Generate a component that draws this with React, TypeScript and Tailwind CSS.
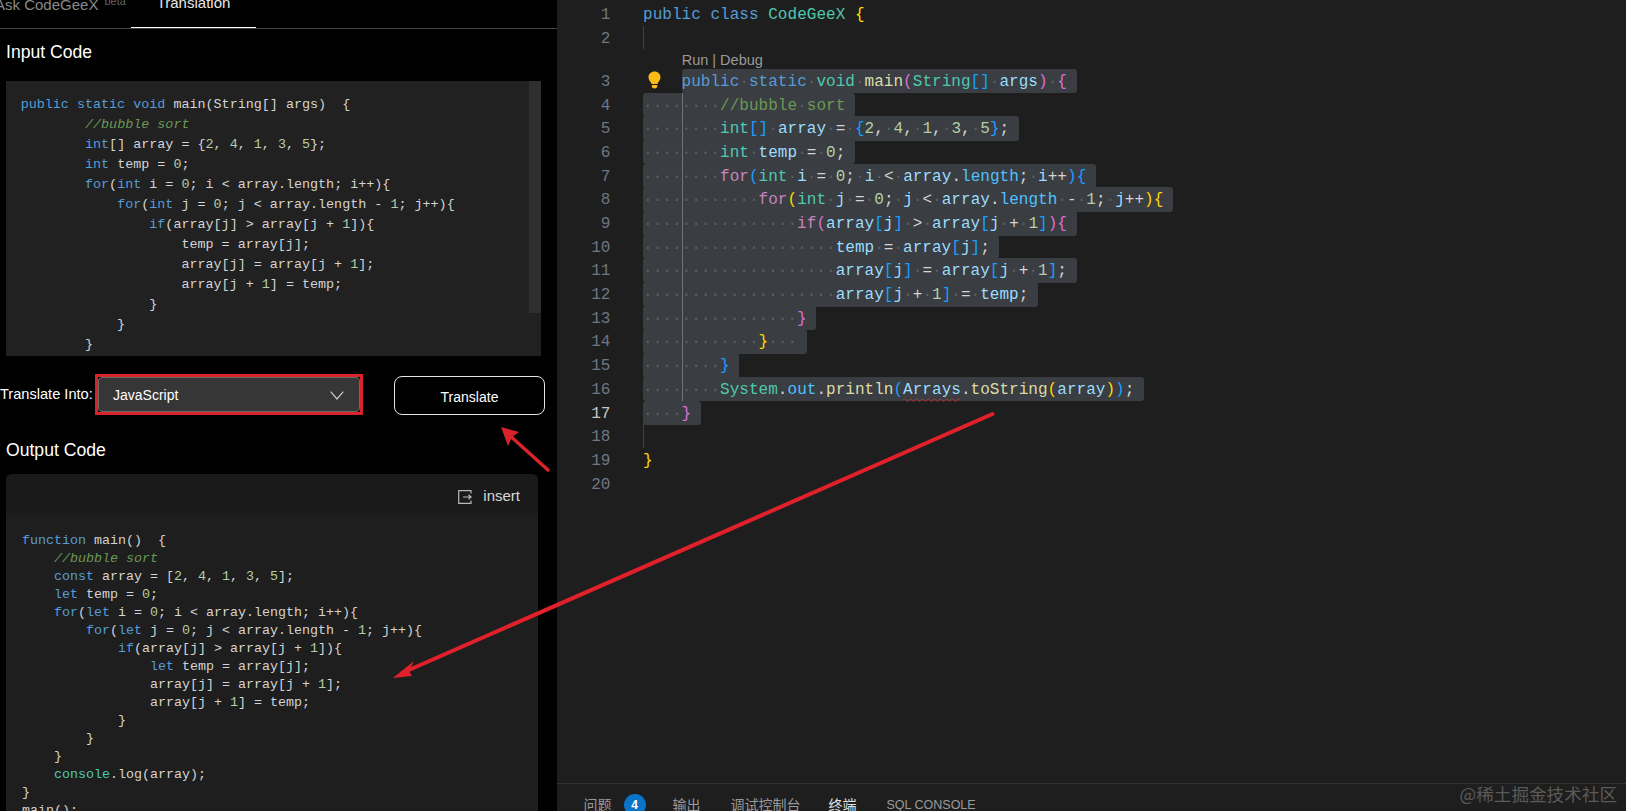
import React from "react";

const KW = "text-[#569cd6]";
const CM = "text-[#6a9955] italic";
const NUM = "text-[#b5cea8]";
const TX = "text-[#d4d4d4]";
const TY = "text-[#4ec9b0]";

type T = [string, string];

function CodeLine({ t }: { t: T[] }) {
  return (
    <div className="whitespace-pre">
      {t.map((p, i) => (
        <span key={i} className={p[1]}>
          {p[0]}
        </span>
      ))}
    </div>
  );
}

const inputCode: T[][] = [
  [["public static void", KW], [" main(String[] args)  {", TX]],
  [["        ", TX], ["//bubble sort", CM]],
  [["        ", TX], ["int", KW], ["[] array = {", TX], ["2", NUM], [", ", TX], ["4", NUM], [", ", TX], ["1", NUM], [", ", TX], ["3", NUM], [", ", TX], ["5", NUM], ["};", TX]],
  [["        ", TX], ["int", KW], [" temp = ", TX], ["0", NUM], [";", TX]],
  [["        ", TX], ["for", KW], ["(", TX], ["int", KW], [" i = ", TX], ["0", NUM], ["; i < array.length; i++){", TX]],
  [["            ", TX], ["for", KW], ["(", TX], ["int", KW], [" j = ", TX], ["0", NUM], ["; j < array.length - ", TX], ["1", NUM], ["; j++){", TX]],
  [["                ", TX], ["if", KW], ["(array[j] > array[j + ", TX], ["1", NUM], ["]){", TX]],
  [["                    temp = array[j];", TX]],
  [["                    array[j] = array[j + ", TX], ["1", NUM], ["];", TX]],
  [["                    array[j + ", TX], ["1", NUM], ["] = temp;", TX]],
  [["                }", TX]],
  [["            }", TX]],
  [["        }", TX]],
];

const outputCode: T[][] = [
  [["function", KW], [" main()  {", TX]],
  [["    ", TX], ["//bubble sort", CM]],
  [["    ", TX], ["const", KW], [" array = [", TX], ["2", NUM], [", ", TX], ["4", NUM], [", ", TX], ["1", NUM], [", ", TX], ["3", NUM], [", ", TX], ["5", NUM], ["];", TX]],
  [["    ", TX], ["let", KW], [" temp = ", TX], ["0", NUM], [";", TX]],
  [["    ", TX], ["for", KW], ["(", TX], ["let", KW], [" i = ", TX], ["0", NUM], ["; i < array.length; i++){", TX]],
  [["        ", TX], ["for", KW], ["(", TX], ["let", KW], [" j = ", TX], ["0", NUM], ["; j < array.length - ", TX], ["1", NUM], ["; j++){", TX]],
  [["            ", TX], ["if", KW], ["(array[j] > array[j + ", TX], ["1", NUM], ["]){", TX]],
  [["                ", TX], ["let", KW], [" temp = array[j];", TX]],
  [["                array[j] = array[j + ", TX], ["1", NUM], ["];", TX]],
  [["                array[j + ", TX], ["1", NUM], ["] = temp;", TX]],
  [["            }", TX]],
  [["        }", TX]],
  [["    }", TX]],
  [["    ", TX], ["console", TY], [".log(array);", TX]],
  [["}", TX]],
  [["main();", TX]],
];

const B = "text-[#569cd6]";
const P = "text-[#da70d6]";
const G = "text-[#ffd700]";
const BL = "text-[#179fff]";
const V = "text-[#9cdcfe]";
const F = "text-[#dcdcaa]";
const C = "text-[#6a9955]";
const O = "text-[#d4d4d4]";
const K = "text-[#c586c0]";
const L = "text-[#4fc1ff]";

type Row = { n: number; t: T[]; sel?: boolean; start?: number; guide4?: boolean; guide0?: boolean };

const rows: Row[] = [
  { n: 1, t: [["public class", B], [" ", O], ["CodeGeeX", TY], [" ", O], ["{", G]] },
  { n: 2, t: [], guide0: true },
  { n: 3, sel: true, start: 4, t: [["public static", B], [" ", O], ["void", TY], [" ", O], ["main", F], ["(", P], ["String", TY], ["[]", BL], [" ", O], ["args", V], [")", P], [" ", O], ["{", P]] },
  { n: 4, sel: true, guide4: true, t: [["        ", O], ["//bubble sort", C]] },
  { n: 5, sel: true, guide4: true, t: [["        ", O], ["int", TY], ["[]", BL], [" ", O], ["array", V], [" = ", O], ["{", BL], ["2", NUM], [", ", O], ["4", NUM], [", ", O], ["1", NUM], [", ", O], ["3", NUM], [", ", O], ["5", NUM], ["}", BL], [";", O]] },
  { n: 6, sel: true, guide4: true, t: [["        ", O], ["int", TY], [" ", O], ["temp", V], [" = ", O], ["0", NUM], [";", O]] },
  { n: 7, sel: true, guide4: true, t: [["        ", O], ["for", K], ["(", BL], ["int", TY], [" ", O], ["i", V], [" = ", O], ["0", NUM], ["; ", O], ["i", V], [" < ", O], ["array", V], [".", O], ["length", L], ["; ", O], ["i", V], ["++", O], ["){", BL]] },
  { n: 8, sel: true, guide4: true, t: [["            ", O], ["for", K], ["(", G], ["int", TY], [" ", O], ["j", V], [" = ", O], ["0", NUM], ["; ", O], ["j", V], [" < ", O], ["array", V], [".", O], ["length", L], [" - ", O], ["1", NUM], ["; ", O], ["j", V], ["++", O], ["){", G]] },
  { n: 9, sel: true, guide4: true, t: [["                ", O], ["if", K], ["(", P], ["array", V], ["[", BL], ["j", V], ["]", BL], [" > ", O], ["array", V], ["[", BL], ["j", V], [" + ", O], ["1", NUM], ["]", BL], ["){", P]] },
  { n: 10, sel: true, guide4: true, t: [["                    ", O], ["temp", V], [" = ", O], ["array", V], ["[", BL], ["j", V], ["]", BL], [";", O]] },
  { n: 11, sel: true, guide4: true, t: [["                    ", O], ["array", V], ["[", BL], ["j", V], ["]", BL], [" = ", O], ["array", V], ["[", BL], ["j", V], [" + ", O], ["1", NUM], ["]", BL], [";", O]] },
  { n: 12, sel: true, guide4: true, t: [["                    ", O], ["array", V], ["[", BL], ["j", V], [" + ", O], ["1", NUM], ["]", BL], [" = ", O], ["temp", V], [";", O]] },
  { n: 13, sel: true, guide4: true, t: [["                ", O], ["}", P]] },
  { n: 14, sel: true, guide4: true, t: [["            ", O], ["}", G], ["   ", O]] },
  { n: 15, sel: true, guide4: true, t: [["        ", O], ["}", BL]] },
  { n: 16, sel: true, guide4: true, t: [["        ", O], ["System", TY], [".", O], ["out", L], [".", O], ["println", F], ["(", BL], ["Arrays", V], [".", O], ["toString", F], ["(", G], ["array", V], [")", G], [")", BL], [";", O]] },
  { n: 17, sel: true, t: [["    ", O], ["}", P]] },
  { n: 18, t: [], guide0: true },
  { n: 19, t: [["}", G]] },
  { n: 20, t: [] },
];

function Toks({ t, sel }: { t: T[]; sel?: boolean }) {
  return (
    <>
      {t.map((p, i) => {
        if (sel && /^ +$/.test(p[0])) {
          return (
            <span key={i} className="text-[#5c5f63]">
              {"·".repeat(p[0].length)}
            </span>
          );
        }
        if (sel && p[0].includes(" ")) {
          const parts = p[0].split(/( +)/);
          return (
            <span key={i} className={p[1]}>
              {parts.map((s, j) =>
                /^ +$/.test(s) ? (
                  <span key={j} className="text-[#5c5f63]">
                    {"·".repeat(s.length)}
                  </span>
                ) : (
                  <span key={j}>{s}</span>
                )
              )}
            </span>
          );
        }
        return (
          <span key={i} className={p[1]}>
            {p[0]}
          </span>
        );
      })}
    </>
  );
}

function EditorRow({ r }: { r: Row }) {
  return (
    <div className="relative flex h-[23.7px] leading-[27.7px]">
      <div className={`w-[53.5px] text-right ${r.n === 17 ? "text-[#c6c6c6]" : "text-[#6e7681]"}`}>{r.n}</div>
      <div className="ml-[32.5px] whitespace-pre">
        {r.start ? <span>{" ".repeat(r.start)}</span> : null}
        {r.sel ? (
          <span className="inline-block h-[24.5px] rounded-[3px] bg-[#3a3d41] pr-[9.63px] align-top">
            <Toks t={r.t} sel />
          </span>
        ) : (
          <Toks t={r.t} />
        )}
      </div>
      {r.guide4 && <div className="absolute left-[124.5px] top-0 h-full w-px bg-[#6f7276]" />}
      {r.guide0 && <div className="absolute left-[86px] top-0 h-full w-px bg-[#404040]" />}
      {r.n === 3 && (
        <svg className="absolute left-[91px] top-[2px]" width="13" height="18" viewBox="0 0 13 18">
          <path d="M6.5 0.5C3 0.5 0.5 3 0.5 6.2c0 2.3 1.3 3.6 2.2 5 .5.8.7 1.3.8 1.8h6c.1-.5.3-1 .8-1.8.9-1.4 2.2-2.7 2.2-5C12.500 3 10 .5 6.500 .5z" fill="#fbbc14" />
          <path d="M3.800 14h5.400v1.500c0 .8-.8 2-2.700 2s-2.700-1.200-2.700-2z" fill="#fbbc14" />
        </svg>
      )}
    </div>
  );
}

export default function App() {
  const sans = "font-['Liberation_Sans',Arial,sans-serif]";
  return (
    <div className={`relative flex h-[811px] w-[1626px] overflow-hidden bg-[#1e1e1e] ${sans}`}>
      {/* left panel */}
      <div className="flex h-full w-[557px] shrink-0 flex-col overflow-hidden bg-black">
        <div className="flex h-[29px] shrink-0 items-end overflow-hidden border-b border-[#444]">
          <div className="ml-[-5px] flex h-[28px] w-[136px] items-end whitespace-nowrap pb-[13px] text-[15px] leading-[20px] text-[#8a8a8a]">
            <span>Ask CodeGeeX</span>
            <span className="mb-[8px] ml-[6px] text-[11px] leading-[12px] text-[#666]">beta</span>
          </div>
          <div className="flex h-[28px] w-[125px] items-end justify-center border-b border-white pb-[14px] text-[15px] leading-[20px] text-[#e8e8e8]">
            Translation
          </div>
        </div>

        <h2 className="ml-[6px] mt-[11px] h-[24px] text-[17.600px] leading-[24px] text-white">Input Code</h2>

        <div className="relative ml-[6px] mt-[17px] h-[275px] w-[535px] shrink-0 overflow-hidden bg-[#212121] pl-[14.700px] pt-[14px] font-['Liberation_Mono',monospace] text-[13.400px] leading-[20px]">
          {inputCode.map((l, i) => (
            <CodeLine key={i} t={l} />
          ))}
          <div className="absolute right-0 top-0 h-[232px] w-[12px] bg-[#2f2f2f]" />
        </div>

        <div className="mt-[18px] flex h-[41px] shrink-0 items-center">
          <span className="w-[92px] whitespace-nowrap text-[14.600px] text-white">Translate Into:</span>
          <div className="ml-[3px] h-[41px] w-[268px] border-[3px] border-[#d7232b]">
            <div className="flex h-full items-center justify-between rounded-[4px] border border-[#6a6a6a] bg-[#363636] pl-[14px] pr-[15px] pt-[2px] text-[14px] text-white">
              <span>JavaScript</span>
              <svg width="14" height="9" viewBox="0 0 14 9" fill="none" stroke="#c8c8c8" strokeWidth="1.200">
                <path d="M0.700 0.700 7 8 13.300 0.700" />
              </svg>
            </div>
          </div>
          <button className="ml-[31px] mt-[1px] flex h-[39px] w-[151px] items-center justify-center rounded-[8px] border border-[#e6e6e6] bg-black pt-[4px] text-[14px] text-white">
            Translate
          </button>
        </div>

        <h2 className="ml-[6px] mt-[23px] h-[24px] text-[17.600px] leading-[24px] text-white">Output Code</h2>

        <div className="ml-[6px] mt-[12px] w-[532px] flex-1 overflow-hidden rounded-t-[6px] bg-[#1e1e1e]">
          <div className="flex h-[39px] items-center justify-end bg-[#1a1a1a] pr-[18px] pt-[6px] text-[15px] text-[#d8d8d8]">
            <svg width="14" height="14" viewBox="0 0 14 14" fill="none" stroke="#b8b8b8" strokeWidth="1.200">
              <path d="M13 3.500V0.700H0.700V13.300H13V10.500" />
              <path d="M5 7H13M10.500 4.800 13 7 10.500 9.200" />
            </svg>
            <span className="ml-[11px]">insert</span>
          </div>
          <div className="pl-[16px] pt-[19px] font-['Liberation_Mono',monospace] text-[13.330px] leading-[18px]">
            {outputCode.map((l, i) => (
              <CodeLine key={i} t={l} />
            ))}
          </div>
        </div>
      </div>

      {/* editor */}
      <div className="flex h-full flex-1 flex-col bg-[#1e1e1e]">
        <div className="h-[783px] shrink-0 overflow-hidden pt-[2px] font-['Liberation_Mono',monospace] text-[16px] tracking-[0.03px]">
          {rows.map((r) => (
            <React.Fragment key={r.n}>
              {r.n === 3 && (
                <div className={`ml-[124.700px] h-[19.500px] text-[14.500px] leading-[23.500px] tracking-normal text-[#999] ${sans}`}>
                  Run | Debug
                </div>
              )}
              <EditorRow r={r} />
            </React.Fragment>
          ))}
        </div>
        <div className="flex flex-1 items-start border-t border-[#333] pl-[26.500px] pt-[11px] font-['Liberation_Sans','Noto_Sans_CJK_SC',sans-serif] text-[12.500px] leading-[20px] text-[#9a9a9a]">
          <span className="w-[28px] text-[14px]">问题</span>
          <span className="ml-[12px] mt-[-1px] flex h-[22px] w-[22px] items-center justify-center rounded-full bg-[#0a74c9] text-[12px] font-bold text-white">4</span>
          <span className="ml-[27px] w-[28px] text-[14px]">输出</span>
          <span className="ml-[30px] w-[70px] text-[14px]">调试控制台</span>
          <span className="ml-[28px] w-[29px] text-[14px] text-[#e4e4e4]">终端</span>
          <span className="ml-[29px] whitespace-nowrap">SQL CONSOLE</span>
        </div>
      </div>

      {/* watermark */}
      <div className="absolute bottom-[5px] right-[9px] whitespace-nowrap font-['Noto_Sans_CJK_SC',sans-serif] text-[17.600px] leading-[24px] text-[#5a5a5a]">
        @稀土掘金技术社区
      </div>

      {/* annotations */}
      <svg className="pointer-events-none absolute left-0 top-0" width="1626" height="811" viewBox="0 0 1626 811" fill="none">
        <path d="M903 400q1.500-2.500 3-0t3 0 3 0 3 0 3 0 3 0 3 0 3 0 3 0 3 0 3 0 3 0 3 0 3 0 3 0 3 0 3 0 3 0 3 0" stroke="#b5363a" strokeWidth="1" />
        <path d="M992.500 414 402 673" stroke="#e0202a" strokeWidth="4" strokeLinecap="round" />
        <polygon points="393,678 414,661 409,671 412,676" fill="#e0202a" />
        <path d="M548 470 508 434" stroke="#d8232a" strokeWidth="3.500" strokeLinecap="round" />
        <polygon points="501,427 519,432 512,437 508,446" fill="#d8232a" />
      </svg>
    </div>
  );
}
